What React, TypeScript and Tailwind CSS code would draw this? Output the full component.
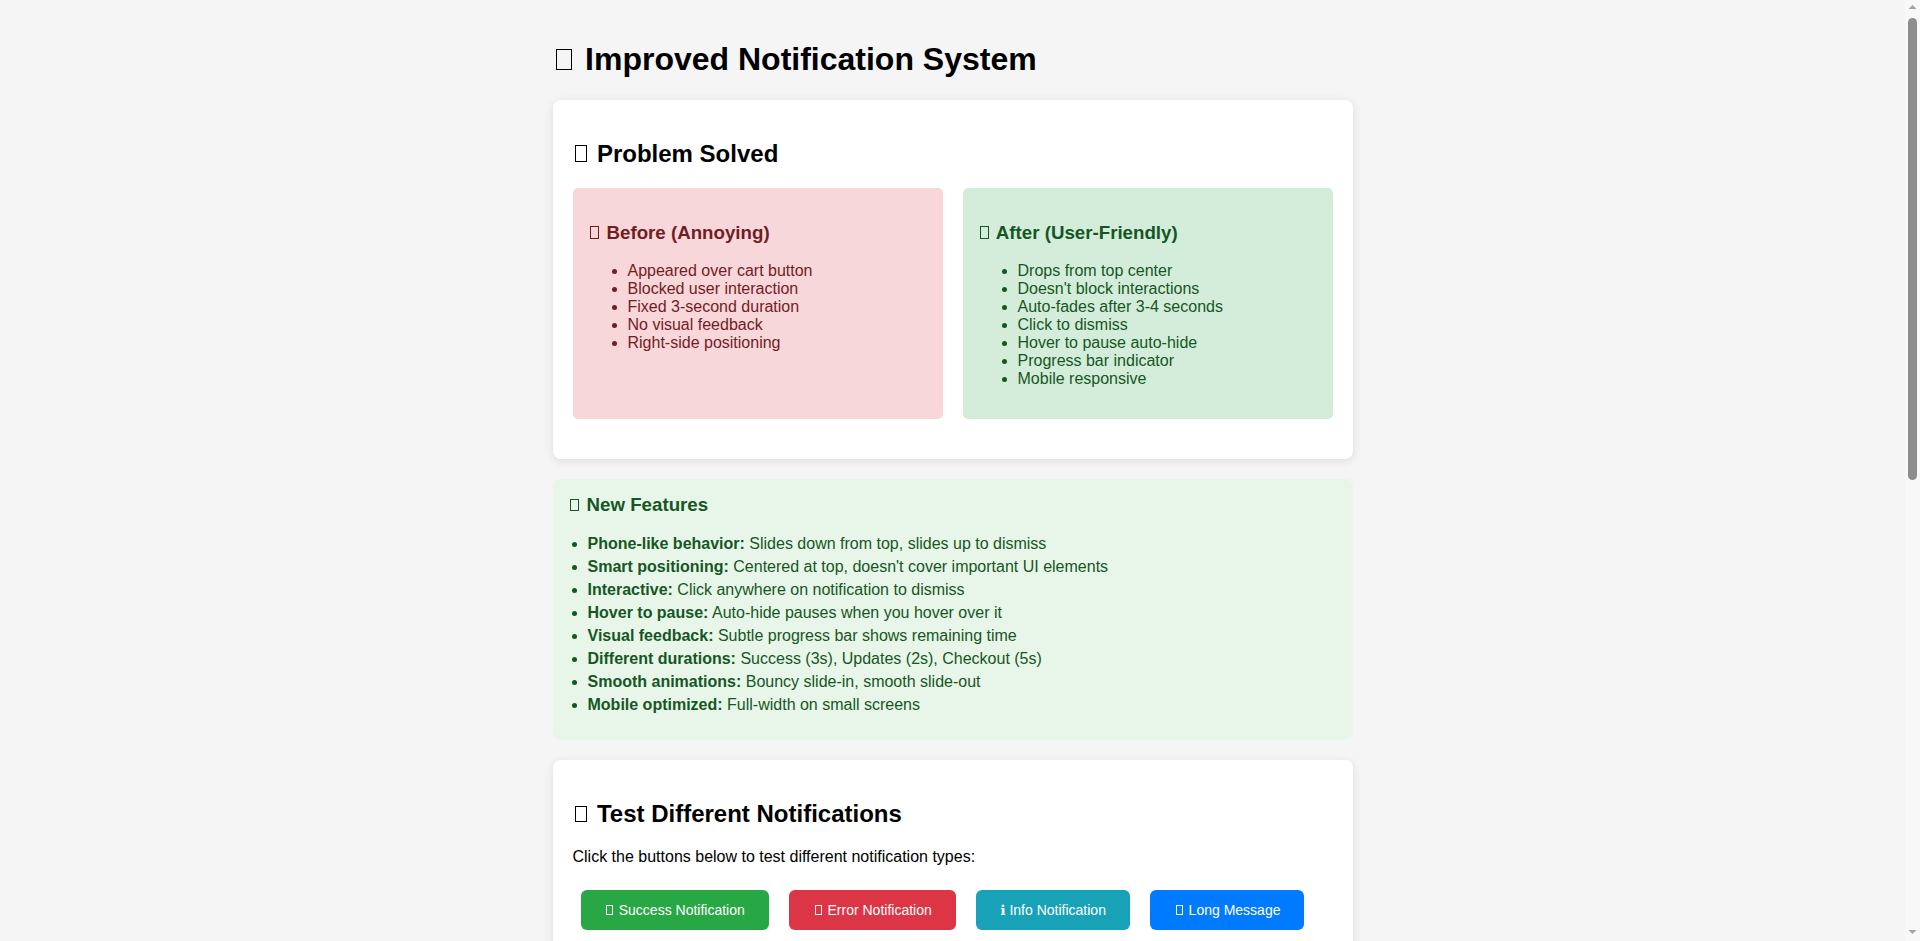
import React from "react";

const before = [
  "Appeared over cart button",
  "Blocked user interaction",
  "Fixed 3-second duration",
  "No visual feedback",
  "Right-side positioning",
];

const after = [
  "Drops from top center",
  "Doesn't block interactions",
  "Auto-fades after 3-4 seconds",
  "Click to dismiss",
  "Hover to pause auto-hide",
  "Progress bar indicator",
  "Mobile responsive",
];

const features: [string, string][] = [
  ["Phone-like behavior:", "Slides down from top, slides up to dismiss"],
  ["Smart positioning:", "Centered at top, doesn't cover important UI elements"],
  ["Interactive:", "Click anywhere on notification to dismiss"],
  ["Hover to pause:", "Auto-hide pauses when you hover over it"],
  ["Visual feedback:", "Subtle progress bar shows remaining time"],
  ["Different durations:", "Success (3s), Updates (2s), Checkout (5s)"],
  ["Smooth animations:", "Bouncy slide-in, smooth slide-out"],
  ["Mobile optimized:", "Full-width on small screens"],
];

// Missing-glyph box, as the emoji renders in the reference (no emoji font)
function Tofu() {
  return (
    <span
      aria-hidden="true"
      className="mx-[0.12em] inline-block h-[0.68em] w-[0.5em] border border-current align-baseline"
    />
  );
}

function Btn({ children, cls }: { children: React.ReactNode; cls: string }) {
  return (
    <button
      className={`m-2 inline-block cursor-pointer rounded-[6px] px-6 py-3 font-['Liberation_Sans',Arial,sans-serif] text-[14px] leading-[normal] text-white ${cls}`}
    >
      {children}
    </button>
  );
}

function Scrollbar() {
  return (
    <div aria-hidden="true" className="fixed right-0 top-0 h-screen w-[15px] bg-[#f8f8f8]">
      <svg className="absolute left-0 top-0" width="15" height="15" viewBox="0 0 15 15">
        <polygon points="3.5,9 11.5,9 7.5,5" fill="#a3a3a3" />
      </svg>
      <div className="absolute left-[3px] top-[18px] h-[462px] w-[9px] rounded-full bg-[#8d8d8d]" />
      <svg className="absolute bottom-0 left-0" width="15" height="15" viewBox="0 0 15 15">
        <polygon points="3.5,4 11.5,4 7.5,8" fill="#a3a3a3" />
      </svg>
    </div>
  );
}

export default function App() {
  return (
    <div className="min-h-screen bg-[#f5f5f5] pr-[15px] font-['Liberation_Sans',Arial,sans-serif] leading-[normal] text-black">
      <div className="mx-auto max-w-[840px] p-5">
        <h1 className="my-[21.44px] text-[32px] font-bold">
          <Tofu /> Improved Notification System
        </h1>

        <div className="my-5 rounded-lg bg-white p-5 shadow-[0_2px_10px_rgba(0,0,0,0.1)]">
          <h2 className="my-[19.92px] text-[24px] font-bold">
            <Tofu /> Problem Solved
          </h2>
          <div className="my-5 grid grid-cols-2 gap-5">
            <div className="rounded-[5px] bg-[#f8d7da] p-[15px] text-[#721c24]">
              <h3 className="my-[18.72px] text-[18.72px] font-bold">
                <Tofu /> Before (Annoying)
              </h3>
              <ul className="my-4 list-disc pl-10">
                {before.map((t) => (
                  <li key={t}>{t}</li>
                ))}
              </ul>
            </div>
            <div className="rounded-[5px] bg-[#d4edda] p-[15px] text-[#155724]">
              <h3 className="my-[18.72px] text-[18.72px] font-bold">
                <Tofu /> After (User-Friendly)
              </h3>
              <ul className="my-4 list-disc pl-10">
                {after.map((t) => (
                  <li key={t}>{t}</li>
                ))}
              </ul>
            </div>
          </div>
        </div>

        <div className="my-5 rounded-lg bg-[#e8f5e9] px-[15px] pb-[21px] pt-[15px] text-[#155724]">
          <h3 className="mb-[18.72px] mt-0 text-[18.72px] font-bold">
            <Tofu /> New Features
          </h3>
          <ul className="m-0 list-disc pl-5">
            {features.map(([b, t]) => (
              <li key={b} className="mb-[5px]">
                <strong className="font-bold">{b}</strong> {t}
              </li>
            ))}
          </ul>
        </div>

        <div className="my-5 rounded-lg bg-white p-5 shadow-[0_2px_10px_rgba(0,0,0,0.1)]">
          <h2 className="my-[19.92px] text-[24px] font-bold">
            <Tofu /> Test Different Notifications
          </h2>
          <p className="my-4">Click the buttons below to test different notification types:</p>
          <div>
            <Btn cls="bg-[#28a745]">
              <Tofu /> Success Notification
            </Btn>{" "}
            <Btn cls="bg-[#dc3545]">
              <Tofu /> Error Notification
            </Btn>{" "}
            <Btn cls="bg-[#17a2b8]">
              <span className="font-['DejaVu_Sans',sans-serif]">ℹ</span> Info Notification
            </Btn>{" "}
            <Btn cls="bg-[#007bff]">
              <Tofu /> Long Message
            </Btn>
          </div>
          <p className="my-4">Cart actions:</p>
          <div>
            <Btn cls="bg-[#6f42c1]">
              <Tofu /> Add to Cart
            </Btn>{" "}
            <Btn cls="bg-[#fd7e14]">
              <Tofu /> Update Quantity
            </Btn>{" "}
            <Btn cls="bg-[#343a40]">
              <Tofu /> Checkout
            </Btn>
          </div>
        </div>

        <div className="my-5 rounded-lg bg-white p-5 shadow-[0_2px_10px_rgba(0,0,0,0.1)]">
          <h2 className="my-[19.92px] text-[24px] font-bold">
            <Tofu /> Mobile Behavior
          </h2>
          <p className="my-4">
            On screens narrower than 768px, notifications stretch to the full width of the viewport with a small margin on each side.
          </p>
          <ul className="my-4 list-disc pl-10">
            <li>Full-width layout with 10px side margins</li>
            <li>Larger touch target for dismissing</li>
            <li>Swipe up to dismiss</li>
            <li>Respects safe-area insets</li>
          </ul>
        </div>

        <div className="my-5 rounded-lg bg-white p-5 shadow-[0_2px_10px_rgba(0,0,0,0.1)]">
          <h2 className="my-[19.92px] text-[24px] font-bold">
            <Tofu /> Configuration
          </h2>
          <p className="my-4">
            Each notification type has its own default duration, which can be overridden when calling the function:
          </p>
          <ul className="my-4 list-disc pl-10">
            <li>Success: 3000ms</li>
            <li>Error: 4000ms</li>
            <li>Info: 3000ms</li>
            <li>Cart updates: 2000ms</li>
            <li>Checkout: 5000ms</li>
          </ul>
          <p className="my-4">Pass a duration of 0 to keep the notification visible until the user dismisses it.</p>
        </div>
      </div>
      <Scrollbar />
    </div>
  );
}
